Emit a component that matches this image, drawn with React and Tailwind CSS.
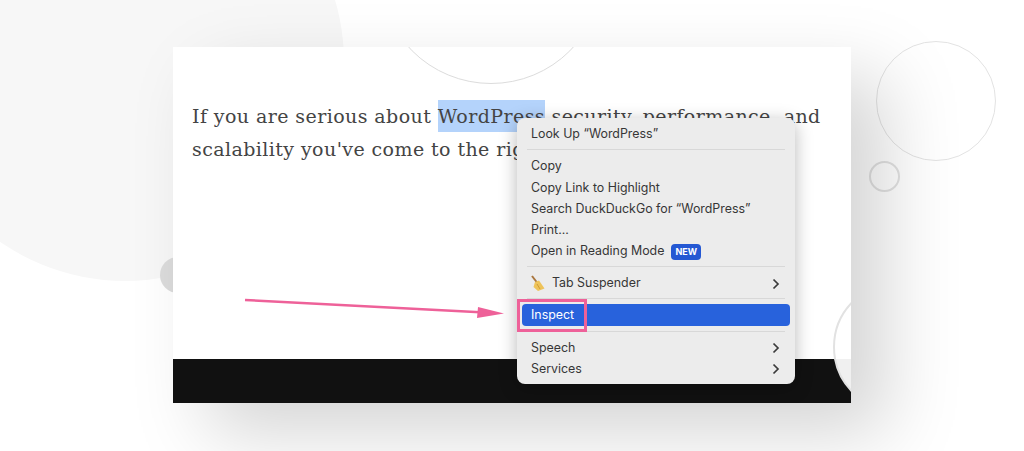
const MenuRow = ({ children, arrow, active }) => (
  <div
    className={
      "flex h-[21.2px] items-center justify-between rounded-[4px] px-[9px] " +
      (active ? "bg-[#2862dc] text-white" : "pt-[2px] text-[#363636]")
    }
  >
    <div className="flex items-center">{children}</div>
    {arrow && (
      <svg width="8" height="12" viewBox="0 0 8 12" fill="none" className="mr-[1px]">
        <path d="M1.5 1.5 6 6l-4.5 4.5" stroke="#3a3a3a" strokeWidth="1.7" />
      </svg>
    )}
  </div>
);

const Divider = () => <div className="mx-[5px] my-[5px] h-px bg-[#d8d8d8]" />;

const Broom = () => (
  <svg width="16" height="17" viewBox="0 0 16 17" className="mr-[6px] ml-[-1px]">
    <path d="M2 1 7 7.5" stroke="#a9763f" strokeWidth="2" />
    <path d="M5 7 9 5.5 14.5 13.5 8 16 3.5 12Z" fill="#eec35a" />
    <path d="M7 9 10 14" stroke="#d09c35" strokeWidth="1" />
  </svg>
);

export default function App() {
  return (
    <div className="relative h-[451px] w-[1024px] overflow-hidden bg-white pt-[47px] pl-[173px]">
      {/* backdrop circles */}
      <div className="absolute top-[-157px] left-[-94px] h-[438px] w-[438px] rounded-full bg-[#f7f7f7]" />
      <div className="absolute top-[257px] left-[160px] h-[36px] w-[36px] rounded-full bg-[#dcdcdc]" />
      <div className="absolute top-[41px] left-[876px] h-[120px] w-[120px] rounded-full border border-[#e3e3e3]" />
      <div className="absolute top-[161px] left-[869px] h-[31px] w-[31px] rounded-full border-2 border-[#e2e2e2]" />

      {/* page window */}
      <div className="relative flex h-[356px] w-[678px] flex-col bg-white shadow-[35px_30px_70px_rgba(0,0,0,0.17)]">
        <div className="relative flex-1 overflow-hidden pt-[53px] pl-[19px] font-['DejaVu_Serif',serif] text-[19px] leading-[33px] tracking-[0.42px] text-[#444]">
          <div className="absolute top-[-187px] left-[206px] h-[224px] w-[224px] rounded-full border border-[#dcdcdc]" />
          <div className="absolute top-[235px] left-[660px] h-[130px] w-[130px] rounded-full border-2 border-[#e2e2e2] bg-white" />
          <p className="relative whitespace-nowrap">
            If you are serious about <span className="bg-[#b4d3fb] py-[5px]">WordPress</span> security, performance, and
          </p>
          <p className="relative whitespace-nowrap">scalability you've come to the right place.</p>
        </div>
        <div className="relative h-[44px] overflow-hidden bg-[#111]">
          <div className="absolute top-[-77px] left-[660px] h-[130px] w-[130px] rounded-full border-2 border-[#e2e2e2] bg-[#f0f0f0]" />
        </div>
      </div>

      {/* context menu */}
      <div className="absolute top-[118px] left-[517px] w-[278px] rounded-[8px] bg-[#ececec] p-[5px] font-['Inter',sans-serif] text-[12.4px] shadow-[0_4px_18px_rgba(0,0,0,0.28)]">
        <MenuRow>Look Up “WordPress”</MenuRow>
        <Divider />
        <MenuRow>Copy</MenuRow>
        <MenuRow>Copy Link to Highlight</MenuRow>
        <MenuRow>Search DuckDuckGo for “WordPress”</MenuRow>
        <MenuRow>Print...</MenuRow>
        <MenuRow>
          Open in Reading Mode
          <span className="ml-[7px] rounded-[4px] bg-[#2458d3] px-[4px] py-[2px] text-[9px] leading-[12px] font-bold text-white">NEW</span>
        </MenuRow>
        <Divider />
        <MenuRow arrow>
          <Broom />
          Tab Suspender
        </MenuRow>
        <Divider />
        <MenuRow active>Inspect</MenuRow>
        <Divider />
        <MenuRow arrow>Speech</MenuRow>
        <MenuRow arrow>Services</MenuRow>
      </div>

      {/* annotations */}
      <div className="absolute top-[299px] left-[517px] h-[33px] w-[70px] border-[3px] border-[#ee6199]" />
      <svg className="absolute top-[290px] left-[240px]" width="270" height="35" viewBox="0 0 270 35">
        <path d="M5 10 245 22.5" stroke="#ee6199" strokeWidth="2.5" />
        <path d="M238 17 264 23.5 237 28Z" fill="#ee6199" />
      </svg>
    </div>
  );
}
